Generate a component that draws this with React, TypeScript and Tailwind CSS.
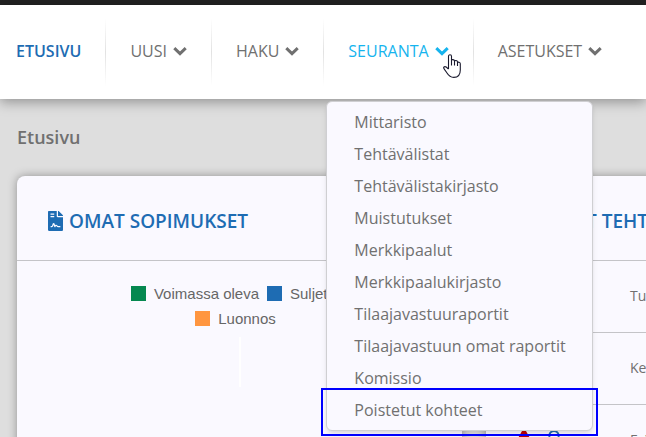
import { FaFileContract, FaFileSignature, FaRegUser } from "react-icons/fa";

const followUpLinks = [
  "Mittaristo",
  "Tehtävälistat",
  "Tehtävälistakirjasto",
  "Muistutukset",
  "Merkkipaalut",
  "Merkkipaalukirjasto",
  "Tilaajavastuuraportit",
  "Tilaajavastuun omat raportit",
  "Komissio",
];

function Separator() {
  return <span className="h-[68px] w-px shrink-0 bg-gradient-to-b from-white via-[#e2e2e2] to-white" />;
}

function NavButton({ label, active = false }: { label: string; active?: boolean }) {
  return (
    <button
      type="button"
      className={
        active
          ? "flex items-center gap-1.5 px-6 pb-0.5 text-[#16b4ee] uppercase"
          : "flex items-center gap-1.5 px-6 pb-0.5 text-[#707070] uppercase"
      }
    >
      {label}
      <svg viewBox="0 0 14 10" className="h-2.5 w-3.5" aria-hidden="true">
        <path d="M1.3 2.2L7 7.6L12.7 2.2" fill="none" stroke="currentColor" strokeWidth="3" />
      </svg>
    </button>
  );
}

function HandCursor() {
  return (
    <svg viewBox="0 0 18 24" className="absolute top-9 left-[119px] z-30 h-6 w-[18px]" aria-hidden="true">
      <path
        d="M5.5 15V2.3C5.5 .2 8.5 .2 8.5 2.3V8.5V6.6C8.5 5.2 11.3 5.2 11.5 6.9V8V7.4C11.7 6.1 14.3 6.3 14.5 7.9V9C14.8 7.7 17.3 7.9 17.3 9.8V16C17.3 21 14.5 23.4 10.8 23.4C7.5 23.4 5.6 21.6 4 19C2.8 17 1 15.2 .7 14C.4 12.6 2 12.2 3.2 13L5.5 15.2M8.5 8V11.5M11.5 8V11.5M14.5 9V12"
        fill="white"
        stroke="#1a1a2e"
        strokeWidth="1.1"
        strokeLinejoin="round"
      />
    </svg>
  );
}

function WarningIcon() {
  return (
    <svg viewBox="0 0 24 24" className="size-6 text-[#c00000]" aria-hidden="true">
      <path
        d="M12 2.5L22 20.5H2Z"
        fill="currentColor"
        stroke="currentColor"
        strokeWidth="3"
        strokeLinejoin="round"
      />
      <path d="M12 9.500V14.500M12 17.200V19" stroke="white" strokeWidth="2" />
    </svg>
  );
}

function FollowUpMenu() {
  return (
    <ul className="absolute top-[83px] left-0.5 z-20 w-[267px] rounded-md border border-[#cfcfd2] bg-[#faf9ff] py-1 text-[#707070] shadow-md">
      {followUpLinks.map((link) => (
        <li key={link}>
          <a href="#" className="block px-[27px] leading-8 whitespace-nowrap">
            {link}
          </a>
        </li>
      ))}
      <li className="relative">
        <a href="#" className="block px-[27px] leading-8 whitespace-nowrap">
          Poistetut kohteet
        </a>
        <span className="pointer-events-none absolute -inset-x-1.5 -top-1.5 -bottom-2.5 border-2 border-[#0000ff]" />
      </li>
    </ul>
  );
}

function Legend() {
  const items = [
    { label: "Voimassa oleva", color: "bg-[#058850]" },
    { label: "Suljettu", color: "bg-[#1e6cb3]" },
    { label: "Luonnos", color: "bg-[#ff9640]" },
  ];

  return (
    <ul className="mx-auto flex w-60 flex-wrap justify-center font-['Liberation_Sans',sans-serif] text-[15px] leading-[25px] text-[#666]">
      {items.map((item) => (
        <li key={item.label} className="flex items-center gap-2 pr-2">
          <span className={`size-[15px] ${item.color}`} />
          {item.label}
        </li>
      ))}
    </ul>
  );
}

export default function App() {
  return (
    <div className="flex h-screen flex-col overflow-hidden bg-[#dedede] font-['Open_Sans',sans-serif] text-base">
      <div className="h-[5px] shrink-0 bg-[#222]" />
      <header className="relative z-10 shrink-0 bg-white py-[13px] shadow-[0_3px_12px_rgba(0,0,0,0.35)]">
        <nav className="flex items-stretch pl-4">
          <a href="#" className="flex items-center pr-6 pb-0.5 font-semibold text-[#1e6cb3] uppercase">
            Etusivu
          </a>
          <Separator />
          <NavButton label="Uusi" />
          <Separator />
          <NavButton label="Haku" />
          <Separator />
          <div className="relative flex">
            <NavButton label="Seuranta" active />
            <HandCursor />
            <FollowUpMenu />
          </div>
          <Separator />
          <NavButton label="Asetukset" />
        </nav>
      </header>

      <main className="flex flex-1 flex-col px-[17px] pt-6">
        <h1 className="text-lg leading-7 font-semibold text-[#707070]">Etusivu</h1>
        <div className="mt-[25px] flex flex-1 gap-6">
          <section className="w-[445px] shrink-0 rounded-t-lg bg-[#faf9ff] shadow-[0_0_10px_rgba(0,0,0,0.35)]">
            <h2 className="flex h-[85px] items-center gap-1.5 border-b border-[#c4c4c8] pt-1.5 pl-[31px] text-[19px] font-semibold text-[#1e6cb3] uppercase">
              <FaFileContract className="h-5 w-[15px]" />
              Omat sopimukset
            </h2>
            <div className="pt-5">
              <Legend />
              <div className="mx-auto mt-1.5 h-[50px] w-0.5 bg-white" />
            </div>
          </section>

          <section className="w-[445px] shrink-0 rounded-t-lg bg-[#faf9ff] shadow-[0_0_10px_rgba(0,0,0,0.35)]">
            <h2 className="flex h-[85px] items-center gap-1.5 border-b border-[#c4c4c8] pt-1.5 pl-[31px] text-[19px] font-semibold whitespace-nowrap text-[#1e6cb3] uppercase">
              <FaFileSignature className="h-5 w-[18px]" />
              Omat tehtävät
            </h2>
            <table className="w-full text-sm text-[#707070]">
              <tbody>
                <tr className="h-[71px] border-b border-[#c4c4c8]">
                  <td className="w-36" />
                  <td>Tulossa</td>
                </tr>
                <tr className="h-[72px] border-b border-[#c4c4c8]">
                  <td className="w-36" />
                  <td>Kesken</td>
                </tr>
                <tr className="h-[72px]">
                  <td className="w-36">
                    <span className="flex items-center gap-2 pl-[26px]">
                      <WarningIcon />
                      <FaRegUser className="size-5 text-[#1e6cb3]" />
                    </span>
                  </td>
                  <td>Erääntynyt</td>
                </tr>
              </tbody>
            </table>
          </section>
        </div>
      </main>
    </div>
  );
}
